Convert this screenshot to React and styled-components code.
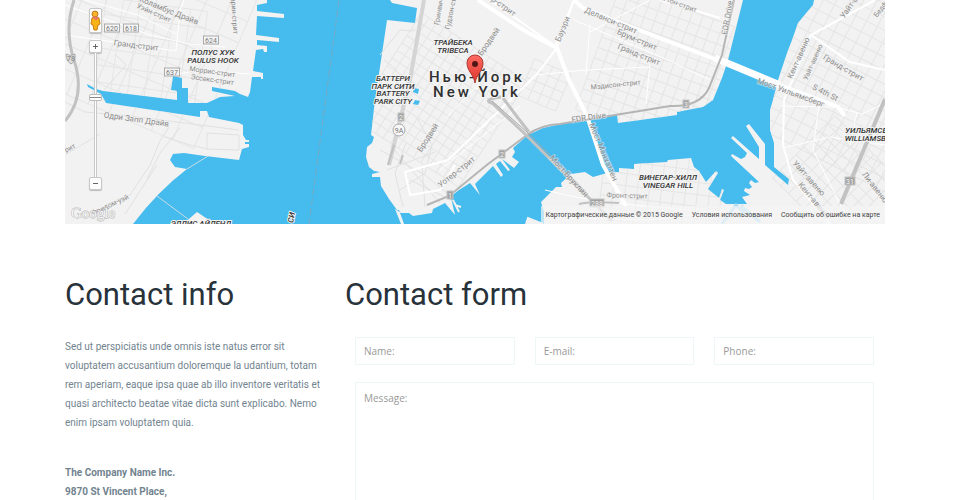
import React from "react";
import styled, { createGlobalStyle } from "styled-components";

const Global = createGlobalStyle`
  *, *::before, *::after { box-sizing: border-box; }
  body { margin: 0; background: #fff; }
`;

const Page = styled.main`
  height: 100vh;
  overflow: hidden;
  padding: 0 80px 0 65px;
  background: #fff;
  color: #72848f;
  font-family: Roboto, sans-serif;
`;

const MapFrame = styled.section`
  position: relative;
  height: 224px;
  overflow: hidden;
  background: #46bbed;
`;

const Drawing = styled.svg`
  display: block;
  width: 100%;
  height: 100%;
`;

const MapControls = styled.div`
  position: absolute;
  top: 8px;
  left: 24px;
  display: flex;
  flex-direction: column;
  align-items: center;
`;

const MapButton = styled.button`
  display: grid;
  place-items: center;
  width: 13px;
  height: ${(p) => (p.$tall ? "25px" : "13px")};
  margin-bottom: ${(p) => (p.$tall ? "7px" : "0")};
  padding: 0;
  border: 1px solid #c8c8c8;
  border-radius: 2px;
  background: #fdfdfd;
  box-shadow: 0 1px 1px #bbb;
`;

const ZoomTrack = styled.input`
  appearance: none;
  writing-mode: vertical-lr;
  direction: rtl;
  width: 13px;
  height: 124px;
  margin: 0;
  background: linear-gradient(90deg, transparent 5px, #c9c9c9 5px, #c9c9c9 6px, #fff 6px, #fff 7px, #c9c9c9 7px, #c9c9c9 8px, transparent 8px);
  &::-webkit-slider-thumb {
    appearance: none;
    width: 13px;
    height: 7px;
    border: 1px solid #bbb;
    border-radius: 2px;
    background: linear-gradient(#fff 2px, #888 2px, #888 3px, #fff 3px);
  }
`;

const Credits = styled.footer`
  position: absolute;
  right: 0;
  bottom: 0;
  display: flex;
  gap: 9px;
  padding: 0 5px 0 4px;
  background: rgba(245, 245, 245, 0.7);
  color: #444;
  font-size: 7px;
  line-height: 18px;
  white-space: nowrap;
`;

const CreditLink = styled.a`
  color: inherit;
  text-decoration: none;
`;

const Columns = styled.div`
  display: grid;
  grid-template-columns: 258px 1fr;
  gap: 22px;
  padding-top: 51px;
`;

const Heading = styled.h2`
  margin: 0 0 22px;
  color: #28323a;
  font-size: 31px;
  font-weight: 400;
  line-height: 40px;
`;

const Paragraph = styled.p`
  margin: 0 0 31px;
  font-size: 10px;
  line-height: 19px;
`;

const Address = styled.address`
  font-size: 10px;
  font-style: normal;
  font-weight: 700;
  line-height: 19px;
`;

const Form = styled.form`
  display: grid;
  grid-template-columns: repeat(3, 1fr);
  column-gap: 20px;
  row-gap: 17px;
  padding: 0 11px 0 10px;
`;

const Field = styled.input`
  width: 100%;
  min-width: 0;
  height: 28px;
  padding: 0 8px;
  border: 1px solid #edf7f8;
  border-radius: 0;
  background: #fff;
  color: #777;
  font: 10px/16px "Open Sans", sans-serif;
  &::placeholder { color: #999; opacity: 1; }
`;

const MessageField = styled(Field)`
  grid-column: 1 / -1;
  height: 180px;
  padding: 7px 8px;
  resize: none;
`;

const shores = {
  jersey:
    "M65 0H267V3L257 5V11L284 14V18L257 16L256 35L279 38V42L257 40V45L267 46V52H264L263 49L256 50L253 71L263 73V79H261V77H252L250 92L248 97L240 94L235 91L212 87V91L235 96L220 97L207 103L188 103V88H182V78L173 76L171 90L177 91V100L103 91L96 89L87 84L88 87L101 94L106 103L200 117V111H207L209 117L239 123L243 125V135L246 140H249V142H245V144H249V147L242 149L239 160L205 156L184 153L173 154L170 160L175 167L187 169Q158 191 133 224H65Z",
  manhattan:
    "M390 0L392 3L417 8L415 23L387 20L380 67L375 100L371 135L374 137L372 143L367 147L366 157L369 167L374 171L380 172L372 174V177H380L381 186L389 199L397 210H399L404 224H401L395 209L401 213H409L413 216L432 213L433 209L445 203L455 215L452 202L450 197L459 190L470 183L480 195L475 184L493 166L501 177L503 175L496 164L500 161L508 171L510 170L502 159L514 168L519 162L512 157L515 152L513 148L528 135L543 128L570 122L617 115L618 123L677 115V112L703 107L713 100L722 78L728 60L743 0Z",
  brooklyn:
    "M813 5L807 12L798 23L792 40L787 53L778 80L773 100L770 110V130L774 143V167L789 179L788 185L765 165V144L749 124L746 126L759 147V159L733 136L731 138L747 153L745 157L741 159L732 154L731 156L759 182L755 183L751 180L749 183L752 187L749 189L745 188L744 191L750 195L742 197L747 204H726L720 200L724 190L722 189L719 198L708 189L718 173L716 171L706 182L699 171L694 167L691 158L668 160L667 162L634 164V169L619 168V172L607 173L593 177L585 172L571 174L561 183L562 187L556 187L541 202L544 212V224H885V0H814Z",
};

const districts = [
  { id: "jersey", grids: [[150, 55, 8, 17, 3], [145, 28, 23, 23, 4]] },
  { id: "manhattan", grids: [[440, 100, -57, 9, 7], [545, 85, 23, 10, 2], [660, 70, 20, 11, 6]] },
  { id: "brooklyn", grids: [[850, 80, 27, 12, 7], [660, 202, 7, 12, 5], [835, 178, -45, 11, 4]] },
];

function StreetGrid({ spec }) {
  const [x, y, angle, gap, count] = spec;
  const reach = gap * count;
  const lines = [];
  for (let i = -count; i <= count; i++) {
    lines.push(`M${-reach} ${i * gap}H${reach}M${i * gap} ${-reach}V${reach}`);
  }
  return <path d={lines.join("")} transform={`translate(${x} ${y}) rotate(${angle})`} />;
}

const majorRoads = [
  ["M65 5L150 35 190 44 225 47M65 35L176 51 180 10 184 0M85 0L138 15 178 35M173 75L200 70 250 74", 1],
  ["M478 0L525 31 557 48 569 80 587 116 603 165 626 206", 4],
  ["M490 0L555 46L574 0", 2],
  ["M574 0L583 8L670 42L720 61", 4],
  ["M715 58L780 85", 7],
  ["M780 85L838 107L845 116", 4],
  ["M574 0L557 48L536 75L448 160L405 172L410 195L440 190L455 165", 2],
  ["M536 75L585 70L650 67M574 20L670 61L710 80M590 25L586 75", 1],
  ["M650 64L646 104M590 32L650 0M447 117L475 88L505 90M440 170L520 106", 1],
  ["M660 0L720 18M875 0L811 35L784 100L783 145L793 180L830 224M811 35L850 62L885 70", 2],
  ["M780 106L835 107L862 114L885 103M783 148L830 137L885 145M819 105L813 150L850 224M857 112L850 145", 1],
  ["M545 190L575 197L612 203L690 210M570 218L650 220L725 211", 1],
];

const minorRoads =
  "M65 102L85 112L130 116L239 130M116 55L126 65L104 90M65 155L100 134M169 127L160 141L150 165L130 195L105 205M180 128L160 153L147 179M157 165L125 214M207 133L239 135V150L207 149ZM165 137L190 145L207 149M400 190L425 173L432 145L417 118M380 55L400 30L414 31M397 70L384 60M390 145L440 203M380 150L425 175L448 194M422 166L425 207M387 170L435 152M455 202L410 180M406 143L395 173L403 207";

const labels = [
  ["Коламбус Драйв", 168, 13, 22, 8, "street"],
  ["Уэйн-стрит", 153, 15, 24, 7, "street"],
  ["Гранд-стрит", 136, 48, 7, 8, "street"],
  ["Моррис-стрит", 212, 74, 8, 7, "street"],
  ["Эссекс-стрит", 212, 82, 8, 7, "street"],
  ["Одри Запп Драйв", 136, 122, 8, 8, "street"],
  ["Уарин-стрит", 232, 14, 86, 7, "street"],
  ["Фридом-уэй", 111, 207, -25, 7, "street"],
  ["рит", 71, 150, -27, 7, "street"],
  ["Гринвич", 441, 12, -80, 7, "street"],
  ["Гудзон-стрит", 454, 9, -78, 7, "street"],
  ["Бродвей", 491, 43, -55, 8, "street"],
  ["Бродвей", 430, 139, -57, 8, "street"],
  ["Уотер-стрит", 458, 174, -38, 8, "street"],
  ["Уолкер-стрит", 493, 2, 36, 8, "street"],
  ["Бауэри", 565, 30, -68, 8, "street"],
  ["Деланси-стрит", 610, 23, 23, 8, "street"],
  ["Брум-стрит", 636, 42, 23, 8, "street"],
  ["Гранд-стрит", 638, 57, 22, 8, "street"],
  ["Мэдисон-стрит", 616, 87, -6, 7, "street"],
  ["Ривингтон-стрит", 670, 3, 20, 7, "street"],
  ["FDR Drive", 589, 120, -8, 8, "street"],
  ["FDR Drive", 730, 18, -80, 8, "street"],
  ["Мост Манхэттен", 601, 153, 67, 8, "street"],
  ["Мост Бруклин", 567, 178, 48, 8, "street"],
  ["Мост Уильямсберг", 790, 95, 20, 8, "street"],
  ["Кент-авеню", 801, 59, -66, 8, "street"],
  ["Уайт-авеню", 815, 63, -66, 7, "street"],
  ["Уайт-авеню", 857, 1, -54, 8, "street"],
  ["Бедфорд", 886, 6, -53, 7, "street"],
  ["Гранд-стрит", 842, 70, 30, 8, "street"],
  ["S 4th St", 824, 95, 27, 8, "street"],
  ["Уайт-авеню", 807, 180, 48, 8, "street"],
  ["Кент-авеню", 812, 202, 50, 8, "street"],
  ["Ли-авеню", 873, 189, 52, 8, "street"],
  ["Фронт-стрит", 627, 198, 2, 7, "street"],
  ["ПОЛУС ХУК", 213, 55, 0, 8, "area"],
  ["PAULUS HOOK", 213, 63, 0, 8, "area"],
  ["ТРАЙБЕКА", 453, 45, 0, 8, "area"],
  ["TRIBECA", 453, 53, 0, 8, "area"],
  ["БАТТЕРИ", 393, 81, 0, 8, "area"],
  ["ПАРК СИТИ", 393, 89, 0, 8, "area"],
  ["BATTERY", 393, 96, 0, 8, "area"],
  ["PARK CITY", 393, 104, 0, 8, "area"],
  ["ВИНЕГАР-ХИЛЛ", 668, 180, 0, 8, "area"],
  ["VINEGAR HILL", 668, 188, 0, 8, "area"],
  ["УИЛЬЯМСБЕРГ", 873, 133, 0, 8, "area"],
  ["WILLIAMSBURG", 873, 141, 0, 8, "area"],
  ["ЭЛЛИС АЙЛЕНД", 201, 226, 0, 8, "area"],
  ["СИ", 294, 218, -78, 8, "area"],
];

const MapLabel = styled.text`
  text-anchor: middle;
  font-family: Roboto, sans-serif;
  font-size: ${(p) => p.$size}px;
  font-weight: ${(p) => (p.$kind === "area" ? 500 : 400)};
  font-style: ${(p) => (p.$kind === "area" ? "italic" : "normal")};
  fill: ${(p) => (p.$kind === "area" ? "#333" : "#8d8d8d")};
  stroke: ${(p) => (p.$kind === "area" ? "#f3f3f3" : "rgba(243, 243, 243, 0.5)")};
  stroke-width: 2px;
  stroke-linejoin: round;
  paint-order: stroke;
`;

const CityLabel = styled.text`
  text-anchor: middle;
  font: 500 15px Roboto, sans-serif;
  letter-spacing: 3px;
  fill: #303030;
  stroke: #f5f5f5;
  stroke-width: 2px;
  paint-order: stroke;
`;

const MapLogo = styled.text`
  font: 15px "Liberation Serif", serif;
  fill: #f4f4f4;
  stroke: #b5b5b5;
  stroke-width: 1px;
  paint-order: stroke;
`;

const ShieldText = styled.text`
  text-anchor: middle;
  font: 7px Roboto, sans-serif;
  fill: ${(p) => (p.$dark ? "#f3f3f3" : "#777")};
`;

const shields = [
  ["620", 112, 28], ["618", 131, 28], ["624", 211, 40], ["637", 172, 72],
  ["2", 401, 117, true], ["1", 450, 195, true], ["2", 502, 154, true],
  ["3", 686, 104, true], ["31", 850, 181, true], ["288", 597, 203, true],
];

function Shield({ item }) {
  const [text, x, y, dark] = item;
  const width = text.length * 4 + (dark ? 2 : 3);
  return (
    <g>
      <rect x={x - width / 2} y={y - 4} width={width} height="8" fill={dark ? "#a3a3a3" : "#f5f5f5"} stroke={dark ? "#c4c4c4" : "#aaa"} />
      <ShieldText x={x} y={y + 3} $dark={dark}>{text}</ShieldText>
    </g>
  );
}

function CityMap() {
  return (
    <Drawing viewBox="65 0 820 224" preserveAspectRatio="xMidYMid slice" role="img" aria-label="Map of New York">
      <defs>
        {districts.map(({ id }) => (
          <clipPath id={id} key={id}><path d={shores[id]} clipRule="evenodd" /></clipPath>
        ))}
        <linearGradient id="pin" x2="0" y2="1">
          <stop stopColor="#ff6b61" />
          <stop offset="1" stopColor="#dd342c" />
        </linearGradient>
      </defs>
      <rect x="65" width="820" height="224" fill="#46bbed" />
      {districts.map(({ id, grids }) => (
        <g key={id}>
          <path d={shores[id]} fill="#f2f2f2" fillRule="evenodd" />
          <g clipPath={`url(#${id})`} fill="none" stroke="#e5e5e5">
            {grids.map((g, i) => <StreetGrid spec={g} key={i} />)}
          </g>
        </g>
      ))}
      <path d="M183 224L197 212L215 224Z" fill="#f2f2f2" />
      <path d="M526 224L528 218L543 224M453 200L459 212M455 205L461 207" fill="#f2f2f2" stroke="#f2f2f2" strokeWidth="2" />
      <path d={minorRoads} fill="none" stroke="#e1e1e1" />
      <g fill="none" stroke="#fff">
        {majorRoads.map(([d, w]) => <path d={d} strokeWidth={w} key={d} />)}
      </g>
      <path d="M339 0L309 224" fill="none" stroke="#75a9c1" strokeDasharray="7 3" />
      <path d="M157 196L188 219M187 169L208 156" stroke="#c8dce5" fill="none" />
      <path d="M722 224L736 205L745 214M741 206L760 222" stroke="#a8dcf2" strokeWidth="3" fill="none" />
      <g fill="none" stroke="#c2c2c2">
        <path d="M74 0Q64 30 74 60Q86 96 65 121" strokeWidth="3" />
        <path d="M424 0L410 80L389 165" strokeWidth="4" stroke="#d4d4d4" />
        <path d="M394 145L388 165M403 155L400 164" strokeWidth="2" />
        <path d="M427 205L449 196L488 164L527 135Q540 125 560 124L670 106Q700 107 709 88L722 55L734 0" strokeWidth="2" stroke="#b5b5b5" />
        <path d="M501 97Q486 99 489 102L492 103L524 133L612 221M503 98L518 118L529 132" strokeWidth="3" />
        <path d="M841 204L885 99" strokeWidth="4" />
        <path d="M579 204Q590 201 619 203" strokeWidth="2" />
      </g>
      <path d="M492 101L528 133L588 194" fill="none" stroke="#a7a7a7" />
      <g fill="#46bbed"><path d="M414 88L419 89L418 94L413 92ZM415 100L420 101L418 105L413 104Z" /></g>
      <path d="M66 54Q71 57 75 54Q76 61 71 64Q66 61 66 54Z" fill="#ddd" stroke="#aaa" />
      <ShieldText x="71" y="61">78</ShieldText>
      <circle cx="399" cy="130" r="6" fill="#f7f7f7" stroke="#aaa" />
      <ShieldText x="399" y="133">9A</ShieldText>
      {shields.map((item) => <Shield item={item} key={item.join()} />)}
      {labels.map(([text, x, y, angle, size, kind]) => (
        <MapLabel key={`${text}-${x}`} $size={size} $kind={kind} transform={`translate(${x} ${y}) rotate(${angle})`}>{text}</MapLabel>
      ))}
      <CityLabel x="477" y="82">Нью-Йорк</CityLabel>
      <CityLabel x="477" y="97">New York</CityLabel>
      <path d="M475 83C474 75 467 71 467 63A8 8 0 0 1 483 63C483 71 476 75 475 83Z" fill="url(#pin)" stroke="#ab3835" />
      <circle cx="475" cy="64" r="3" fill="#521816" />
      <MapLogo x="71" y="218">Google</MapLogo>
    </Drawing>
  );
}

function Pegman() {
  return (
    <svg width="11" height="23" viewBox="0 0 11 23" aria-hidden="true">
      <path d="M2 9Q5 6 9 9L10 15L8 16L7 21H4L3 16L1 15Z" fill="#f8b316" stroke="#c97c0d" />
      <circle cx="5" cy="5" r="3" fill="#f7b52b" stroke="#bd7d1c" />
      <path d="M3 8L6 10L8 8" fill="none" stroke="#ec7172" strokeWidth="2" />
    </svg>
  );
}

function Sign({ plus }) {
  return (
    <svg width="7" height="7" viewBox="0 0 7 7" aria-hidden="true">
      <path d={plus ? "M1 3.5H6M3.5 1V6" : "M1 3.5H6"} stroke="#666" fill="none" />
    </svg>
  );
}

export default function App() {
  return (
    <Page>
      <Global />
      <MapFrame>
        <CityMap />
        <MapControls>
          <MapButton $tall type="button" aria-label="Street view"><Pegman /></MapButton>
          <MapButton type="button" aria-label="Zoom in"><Sign plus /></MapButton>
          <ZoomTrack type="range" min="0" max="20" defaultValue="13" aria-label="Zoom level" />
          <MapButton type="button" aria-label="Zoom out"><Sign /></MapButton>
        </MapControls>
        <Credits>
          <span>Картографические данные © 2015 Google</span>
          <CreditLink href="#terms">Условия использования</CreditLink>
          <CreditLink href="#report">Сообщить об ошибке на карте</CreditLink>
        </Credits>
      </MapFrame>
      <Columns>
        <section>
          <Heading>Contact info</Heading>
          <Paragraph>
            Sed ut perspiciatis unde omnis iste natus error sit voluptatem accusantium doloremque la udantium, totam rem
            aperiam, eaque ipsa quae ab illo inventore veritatis et quasi architecto beatae vitae dicta sunt explicabo.
            Nemo enim ipsam voluptatem quia.
          </Paragraph>
          <Address>
            The Company Name Inc.<br />
            9870 St Vincent Place,
          </Address>
        </section>
        <section>
          <Heading>Contact form</Heading>
          <Form>
            <Field type="text" placeholder="Name:" aria-label="Name" />
            <Field type="email" placeholder="E-mail:" aria-label="E-mail" />
            <Field type="tel" placeholder="Phone:" aria-label="Phone" />
            <MessageField as="textarea" placeholder="Message:" aria-label="Message" />
          </Form>
        </section>
      </Columns>
    </Page>
  );
}
